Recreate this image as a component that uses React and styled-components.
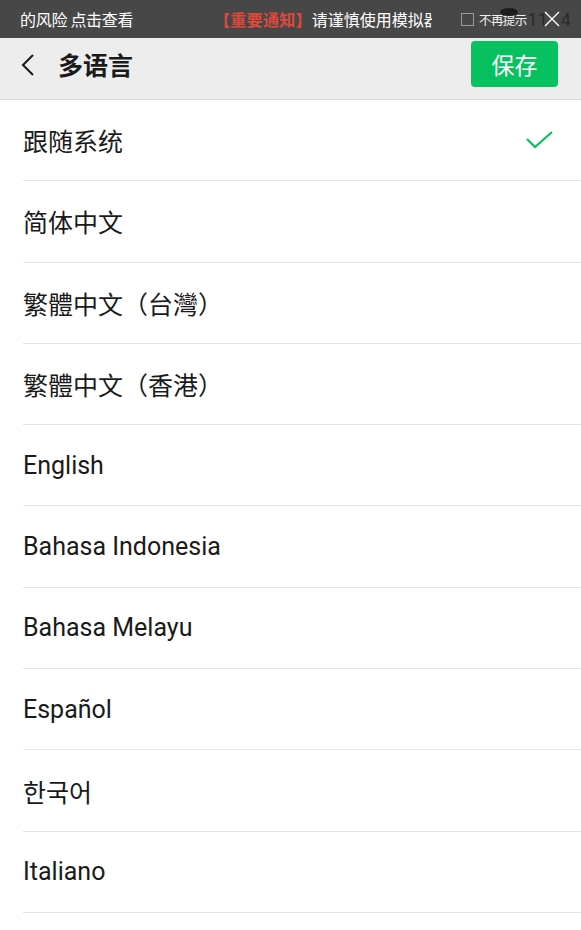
import styled, { createGlobalStyle } from 'styled-components';

const GlobalStyle = createGlobalStyle`
  html, body {
    margin: 0;
    padding: 0;
    background: #ffffff;
  }
  body {
    font-family: Roboto, "Noto Sans CJK SC", sans-serif;
  }
`;

const languages = [
  '跟随系统',
  '简体中文',
  '繁體中文（台灣）',
  '繁體中文（香港）',
  'English',
  'Bahasa Indonesia',
  'Bahasa Melayu',
  'Español',
  '한국어',
  'Italiano',
];

export default function App() {
  return (
    <Page>
      <GlobalStyle />
      <StatusBar>
        <Notice>的风险 点击查看</Notice>
        <Warning>
          <Red>【重要通知】</Red>请谨慎使用模拟器
        </Warning>
        <Dismiss>
          <Box />
          <Small>不再提示</Small>
        </Dismiss>
        <Clock>
          <Blob />
          11
          <CloseX>
            <svg width="16" height="16" viewBox="0 0 16 16">
              <path d="M1 1 L15 15 M15 1 L1 15" stroke="#fff" strokeWidth="1.4" fill="none" />
            </svg>
          </CloseX>
          4
        </Clock>
      </StatusBar>
      <Header>
        <Back>
          <svg width="16" height="24" viewBox="0 0 16 24">
            <path d="M13 2 L3 12 L13 22" stroke="#1a1a1a" strokeWidth="2" fill="none" />
          </svg>
        </Back>
        <Title>多语言</Title>
        <SaveButton>保存</SaveButton>
      </Header>
      <List>
        {languages.map((name, i) => (
          <Row key={name}>
            <Label>{name}</Label>
            {i === 0 && (
              <svg width="30" height="22" viewBox="0 0 30 22">
                <path d="M3 10 L11 18 L28 3" stroke="#07c160" strokeWidth="2.2" fill="none" />
              </svg>
            )}
          </Row>
        ))}
      </List>
    </Page>
  );
}

const Page = styled.div`
  width: 581px;
  min-height: 930px;
  background: #fff;
`;

const StatusBar = styled.div`
  height: 38px;
  background: #474747;
  display: flex;
  align-items: center;
  padding-left: 20px;
  color: #fff;
  font-family: "Noto Sans CJK SC", sans-serif;
  font-size: 16px;
  white-space: nowrap;
  overflow: hidden;
`;

const Notice = styled.span`
  width: 194px;
  letter-spacing: -0.3px;
`;

const Warning = styled.span`
  width: 218px;
  overflow: hidden;
`;

const Red = styled.span`
  color: #e0473b;
  font-weight: 700;
  letter-spacing: 0.3px;
`;

const Dismiss = styled.div`
  display: flex;
  align-items: center;
  gap: 5px;
  margin-left: 29px;
`;

const Box = styled.span`
  width: 11px;
  height: 11px;
  border: 1px solid #9a9a9a;
`;

const Small = styled.span`
  font-size: 12.5px;
  letter-spacing: -0.6px;
  color: #f0f0f0;
`;

const Clock = styled.div`
  position: relative;
  display: flex;
  align-items: center;
  font-family: Roboto, sans-serif;
  font-size: 18px;
  color: #2a2a2a;
  margin-left: 1px;
`;

const Blob = styled.span`
  position: absolute;
  left: -28px;
  top: -1px;
  width: 18px;
  height: 8px;
  border-radius: 50%;
  background: #1c1c1c;
`;

const CloseX = styled.span`
  display: flex;
  margin: 0 1px 0 -4px;
`;

const Header = styled.div`
  height: 62px;
  box-sizing: border-box;
  background: #ededed;
  border-bottom: 1px solid #dcdcdc;
  display: flex;
  align-items: center;
  padding: 0 23px 9px 20px;
`;

const Back = styled.span`
  display: flex;
  margin-right: 22px;
  margin-top: 1px;
`;

const Title = styled.div`
  flex: 1;
  font-family: "Noto Sans CJK SC", sans-serif;
  font-weight: 700;
  font-size: 25px;
  color: #1a1a1a;
`;

const SaveButton = styled.button`
  width: 87px;
  height: 46px;
  border: none;
  border-radius: 4px;
  background: #07c160;
  color: #fff;
  font-family: "Noto Sans CJK SC", sans-serif;
  font-size: 23px;
  padding: 0;
`;

const List = styled.div`
  padding-left: 23px;
`;

const Row = styled.div`
  height: 80.3px;
  border-bottom: 1px solid #e5e5e5;
  display: flex;
  align-items: center;
  justify-content: space-between;
  padding-right: 27px;
`;

const Label = styled.span`
  font-family: Roboto, "Noto Sans CJK SC", "Noto Sans CJK KR", sans-serif;
  font-size: 25px;
  color: #1a1a1a;
`;
